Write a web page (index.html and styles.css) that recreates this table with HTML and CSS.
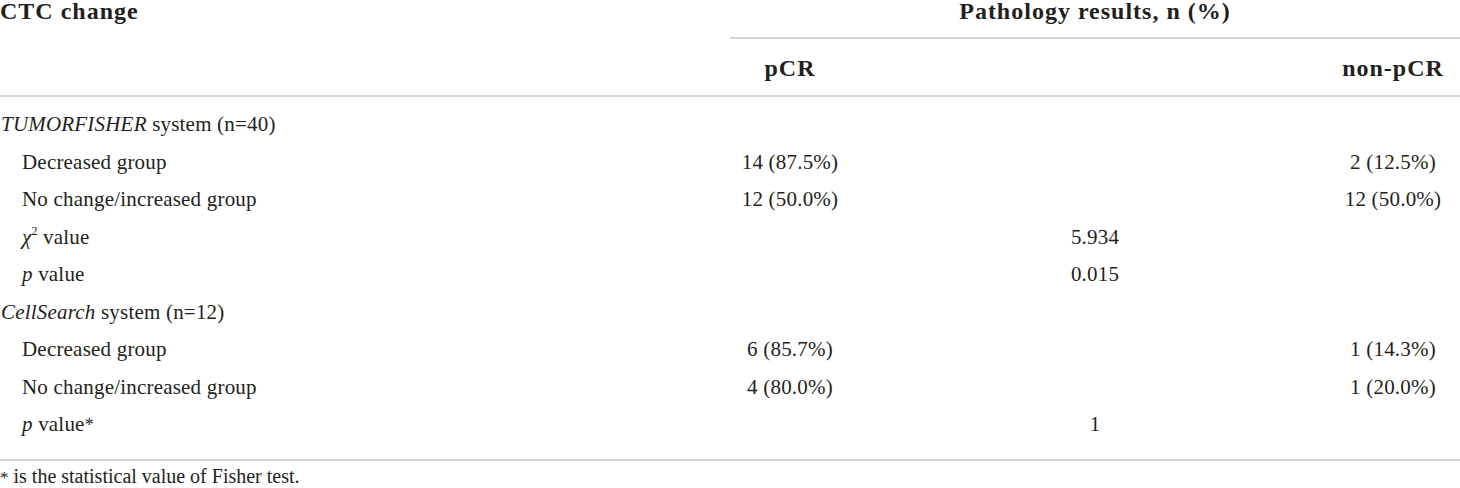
FILE: index.html
```html
<!DOCTYPE html>
<html lang="en">
<head>
<meta charset="utf-8">
<title>CTC change and pathology results</title>
<link rel="stylesheet" href="styles.css">
</head>
<body>
<div class="table">
  <div class="head">
    <div class="h-label">CTC change</div>
    <div class="h-group">Pathology results, n (%)</div>
    <div class="h-col c-pcr">pCR</div>
    <div class="h-col c-npcr">non-pCR</div>
  </div>
  <div class="body">
    <div class="row">
      <div class="label group"><i>TUMORFISHER</i> system (n=40)</div>
    </div>
    <div class="row">
      <div class="label sub">Decreased group</div>
      <div class="cell c-pcr">14 (87.5%)</div>
      <div class="cell c-npcr">2 (12.5%)</div>
    </div>
    <div class="row">
      <div class="label sub">No change/increased group</div>
      <div class="cell c-pcr">12 (50.0%)</div>
      <div class="cell c-npcr">12 (50.0%)</div>
    </div>
    <div class="row">
      <div class="label sub"><span class="chi">χ</span><sup>2</sup> value</div>
      <div class="cell c-span">5.934</div>
    </div>
    <div class="row">
      <div class="label sub"><i>p</i> value</div>
      <div class="cell c-span">0.015</div>
    </div>
    <div class="row">
      <div class="label group"><i>CellSearch</i> system (n=12)</div>
    </div>
    <div class="row">
      <div class="label sub">Decreased group</div>
      <div class="cell c-pcr">6 (85.7%)</div>
      <div class="cell c-npcr">1 (14.3%)</div>
    </div>
    <div class="row">
      <div class="label sub">No change/increased group</div>
      <div class="cell c-pcr">4 (80.0%)</div>
      <div class="cell c-npcr">1 (20.0%)</div>
    </div>
    <div class="row">
      <div class="label sub"><i>p</i> value<span class="ast">*</span></div>
      <div class="cell c-span">1</div>
    </div>
  </div>
  <div class="foot"><span class="ast">*</span> is the statistical value of Fisher test.</div>
</div>
</body>
</html>
```

FILE: styles.css
```css
html, body {
  margin: 0;
  padding: 0;
  background: #ffffff;
}

body {
  font-family: "Liberation Serif", "Times New Roman", serif;
  color: #231f20;
  width: 1460px;
}

.table {
  width: 1460px;
}

.head,
.row {
  display: grid;
  grid-template-columns: 730px 120px 1fr 134px;
}

.head {
  grid-template-rows: auto auto;
  border-bottom: 2px solid #d6d6d6;
  font-weight: bold;
  font-size: 24px;
  letter-spacing: 1px;
  line-height: 23px;
}

.h-label {
  grid-column: 1;
  grid-row: 1 / span 2;
}

.h-group {
  grid-column: 2 / span 3;
  grid-row: 1;
  height: 37px;
  text-align: center;
  border-bottom: 2px solid #d6d6d6;
}

.h-col {
  grid-row: 2;
  text-align: center;
  padding-top: 18px;
  padding-bottom: 15px;
}

.c-pcr {
  grid-column: 2;
  text-align: center;
}

.c-npcr {
  grid-column: 4;
  text-align: center;
}

.c-span {
  grid-column: 2 / span 3;
  text-align: center;
}

.body {
  padding-top: 9px;
  padding-bottom: 15px;
  border-bottom: 2px solid #d6d6d6;
  font-size: 21px;
  letter-spacing: 0.2px;
}

.row {
  height: 37.5px;
  line-height: 37.5px;
}

.label {
  grid-column: 1;
  white-space: nowrap;
}

.label.group {
  padding-left: 1px;
}

.label.sub {
  padding-left: 22px;
}

.cell {
  white-space: nowrap;
}

.chi {
  font-style: italic;
}

sup {
  font-size: 12px;
  line-height: 0;
  vertical-align: 9px;
}

.ast {
  font-size: 0.85em;
}

.foot {
  font-size: 20px;
  line-height: 24px;
  padding-top: 3px;
}
```
